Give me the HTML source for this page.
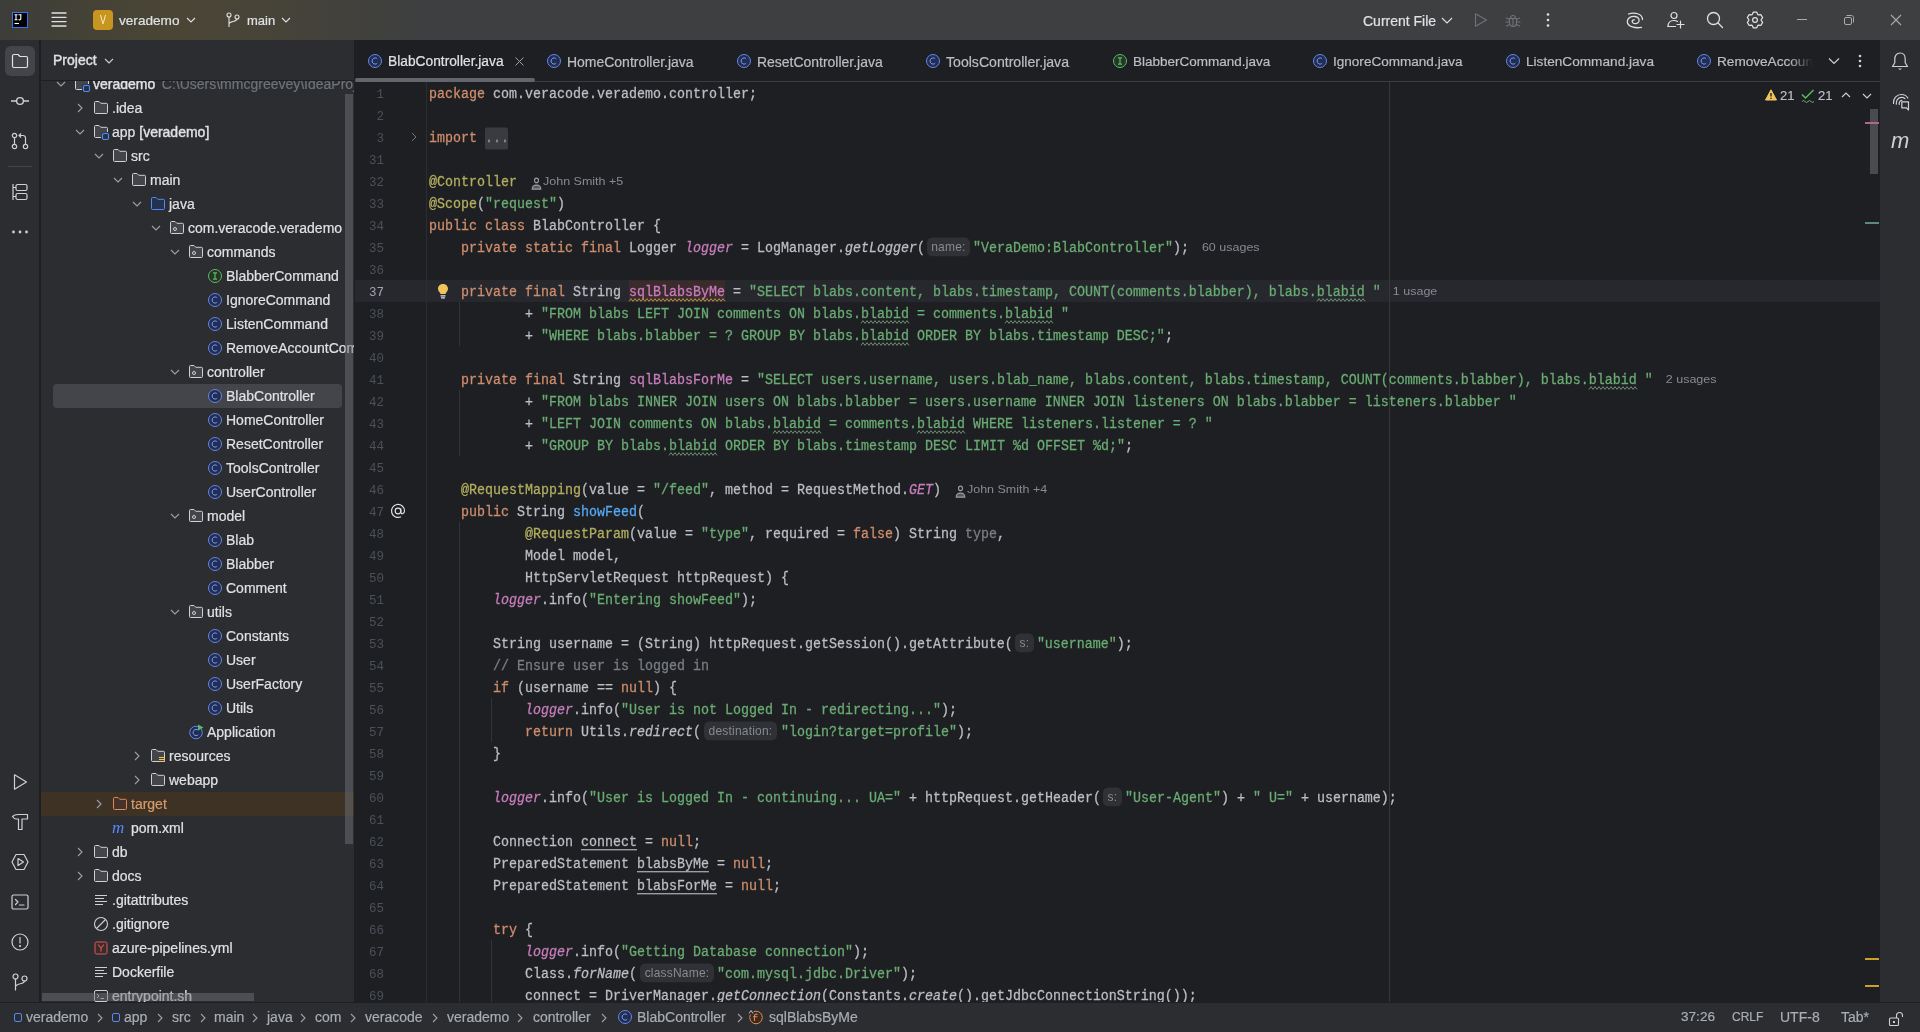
<!DOCTYPE html><html><head><meta charset="utf-8"><style>
*{margin:0;padding:0;box-sizing:border-box}
html,body{width:1920px;height:1032px;overflow:hidden;background:#1E1F22}
body{position:relative;font-family:"Liberation Sans",sans-serif;font-size:14px;color:#DFE1E5}
.a{position:absolute}
#title,#lstripe,#proj,#rstripe,#status,#editor{will-change:transform}
.ui{font-family:"Liberation Sans",sans-serif;white-space:pre;-webkit-text-stroke-width:0.2px}
svg{position:absolute;overflow:visible}
#title{left:0;top:0;width:1920px;height:40px;background:linear-gradient(90deg,#3C3C3A 0px,#444236 80px,#4A4535 170px,#484437 250px,#42413C 340px,#3E3F41 430px)}
#lstripe{left:0;top:40px;width:40px;height:962px;background:#2B2D30;border-right:1px solid #1E1F22}
#proj{left:41px;top:40px;width:313px;height:962px;background:#2B2D30;overflow:hidden}
#rstripe{left:1880px;top:40px;width:40px;height:962px;background:#2B2D30}
#status{left:0;top:1002px;width:1920px;height:30px;background:#2B2D30;border-top:1px solid #1E1F22}
#editor{left:355px;top:40px;width:1525px;height:962px;background:#1E1F22;overflow:hidden}
.row{position:absolute;left:0;height:24px;line-height:24px;white-space:pre;color:#DFE1E5;-webkit-text-stroke-width:0.2px}
.code{position:absolute;left:74px;height:22px;line-height:22px;transform:scaleY(1.1);transform-origin:0 15px;-webkit-text-stroke-width:0.25px;white-space:pre;font-family:"Liberation Mono",monospace;font-size:13.333px;color:#BCBEC4}
.ln{position:absolute;left:0;width:29px;text-align:right;height:22px;line-height:22px;font-family:"Liberation Mono",monospace;font-size:12.5px;color:#4B5059}
.kw{color:#CF8E6D}.s{color:#6AAB73}.an{color:#B3AE60}.f{color:#C77DBB}.fi{color:#C77DBB;font-style:italic}
.m{color:#56A8F5}.it{font-style:italic}.cm{color:#7A7E85}.gr{color:#7A7E85}
.ul{text-decoration:underline;text-underline-offset:3px;text-decoration-thickness:1px}
.wv{text-decoration:underline wavy #6A9955;text-underline-offset:2px;text-decoration-thickness:0.7px;text-decoration-skip-ink:none}
.hint{display:inline-block;height:16.4px;line-height:17.5px;vertical-align:top;margin-top:1.4px;border-radius:5px;background:#2F3135;color:#868A91;font-family:"Liberation Sans",sans-serif;font-size:12px;letter-spacing:0.2px;-webkit-text-stroke-width:0;text-align:center}
.usg{font-family:"Liberation Sans",sans-serif;font-size:12.5px;color:#868A91;display:inline-block;height:22px;line-height:22px;vertical-align:top;margin-top:-1.6px;transform:scaleY(0.86);transform-origin:0 15px;-webkit-text-stroke-width:0}
.tab{position:absolute;top:1px;height:41px;line-height:42px;white-space:pre;color:#BCBEC4;-webkit-text-stroke-width:0.2px}
</style></head><body><div id="title" class="a">
<div class="a" style="left:12px;top:12px;width:16px;height:16px;background:#000;border:1px solid #3574F0"></div>
<svg style="left:12px;top:12px" width="16" height="16" viewBox="0 0 16 16"><g fill="none" stroke="#fff" stroke-width="1.1"><path d="M2.5 2.8 H5.5 M4 2.8 V7.8 M2.5 7.8 H5.5 M6.5 2.8 H9.5 M8.8 2.8 V6.8 C8.8 7.8 7.5 8.2 6.6 7.4"/><path d="M2.5 11.5 H7"/></g></svg>
<svg style="left:51px;top:12px" width="16" height="16" viewBox="0 0 16 16"><g stroke="#DFE1E5" stroke-width="1.3" stroke-linecap="round"><line x1="1" y1="1" x2="15" y2="1"/><line x1="1" y1="5.3" x2="15" y2="5.3"/><line x1="1" y1="9.6" x2="15" y2="9.6"/><line x1="1" y1="14" x2="15" y2="14"/></g></svg>
<div class="a" style="left:93px;top:10px;width:20px;height:20px;border-radius:4px;background:#C8951F;color:#F6F0DC;font-size:12px;line-height:21px;text-align:center"><span style="display:inline-block;transform:scaleX(0.75)">V</span></div>
<div class="a ui" style="left:119px;top:1px;line-height:40px;font-size:13.6px;color:#DFE1E5">verademo</div>
<svg style="left:186px;top:16px" width="10" height="8" viewBox="0 0 10 8"><path d="M1 2 L5 6 L9 2" fill="none" stroke="#DFE1E5" stroke-width="1.1"/></svg>
<svg style="left:226px;top:12px" width="14" height="16" viewBox="0 0 14 16"><g fill="none" stroke="#DFE1E5" stroke-width="1.1"><circle cx="3" cy="3" r="2"/><circle cx="11" cy="5" r="2"/><path d="M3 5 V15 M11 7 C11 10 3 9 3 12"/></g></svg>
<div class="a ui" style="left:247px;top:1px;line-height:40px;font-size:13px;color:#DFE1E5">main</div>
<svg style="left:281px;top:16px" width="10" height="8" viewBox="0 0 10 8"><path d="M1 2 L5 6 L9 2" fill="none" stroke="#DFE1E5" stroke-width="1.1"/></svg>
<div class="a ui" style="left:1363px;top:1px;line-height:40px;font-size:14px;color:#DFE1E5">Current File</div>
<svg style="left:1441px;top:16px" width="12" height="8" viewBox="0 0 12 8"><path d="M1 2 L6 7 L11 2" fill="none" stroke="#DFE1E5" stroke-width="1.1"/></svg>
<svg style="left:1473px;top:12px" width="16" height="16" viewBox="0 0 16 16"><path d="M2.5 1.8 L13.5 8 L2.5 14.2 Z" fill="none" stroke="#6F737A" stroke-width="1.1" stroke-linejoin="round"/></svg>
<svg style="left:1505px;top:12px" width="16" height="16" viewBox="0 0 16 16"><g fill="none" stroke="#6F737A" stroke-width="1.1" stroke-linecap="round" stroke-linejoin="round"><path d="M4.5 6.5 H11.5 V10.5 C11.5 12.7 10 14.5 8 14.5 C6 14.5 4.5 12.7 4.5 10.5 Z"/><path d="M5.5 6.5 C5.5 4.8 6.5 3.5 8 3.5 C9.5 3.5 10.5 4.8 10.5 6.5"/><path d="M8 6.5 V14.5 M1.5 6 L4.5 7.5 M14.5 6 L11.5 7.5 M1 10 H4.5 M15 10 H11.5 M1.5 14 L4.8 12.5 M14.5 14 L11.2 12.5"/></g></svg>
<svg style="left:1545px;top:12px" width="6" height="16" viewBox="0 0 6 16"><g fill="#DFE1E5"><circle cx="3" cy="2.5" r="1.3"/><circle cx="3" cy="8" r="1.3"/><circle cx="3" cy="13.5" r="1.3"/></g></svg>
<svg style="left:1626px;top:12px" width="18" height="17" viewBox="0 0 18 17"><g fill="none" stroke="#DFE1E5" stroke-width="1.3" stroke-linecap="round"><path d="M2.5 2 C8 0 16.5 1.5 16.5 7.5"/><path d="M15.5 15.3 C10 16.5 1.3 15 1.3 9.5 C1.3 5.5 5.5 4 9 4.5 C12.5 5 13.7 7.5 12.8 9.8 C11.8 12 8.3 12.2 6.7 10.6 C5.5 9.3 6.5 7.6 8.3 7.8"/></g></svg>
<svg style="left:1667px;top:11px" width="18" height="18" viewBox="0 0 18 18"><g fill="none" stroke="#DFE1E5" stroke-width="1.2" stroke-linecap="round"><circle cx="7" cy="4.5" r="3"/><path d="M1 15.5 C1 11 4 9.5 7 9.5 C8.5 9.5 9.5 9.8 10.5 10.4"/><path d="M1 15.5 H8.5 M13.5 10 V17 M10 13.5 H17"/></g></svg>
<svg style="left:1706px;top:11px" width="18" height="18" viewBox="0 0 18 18"><g fill="none" stroke="#DFE1E5" stroke-width="1.3" stroke-linecap="round"><circle cx="7.5" cy="7.5" r="6"/><path d="M12 12 L16.5 16.5"/></g></svg>
<svg style="left:1746px;top:11px" width="18" height="18" viewBox="0 0 18 18"><g fill="none" stroke="#DFE1E5" stroke-width="1.2" stroke-linejoin="round"><path d="M6.28 3.43 L7.20 1.21 L10.80 1.21 L11.72 3.43 L12.47 3.86 L14.85 3.54 L16.65 6.66 L15.18 8.57 L15.18 9.43 L16.65 11.34 L14.85 14.46 L12.47 14.14 L11.72 14.57 L10.80 16.79 L7.20 16.79 L6.28 14.57 L5.53 14.14 L3.15 14.46 L1.35 11.34 L2.82 9.43 L2.82 8.57 L1.35 6.66 L3.15 3.54 L5.53 3.86 Z"/><circle cx="9" cy="9" r="2.4"/></g></svg>
<div class="a" style="left:1797px;top:19px;width:10px;height:1px;background:#A9ABB0"></div>
<svg style="left:1843px;top:14px" width="12" height="12" viewBox="0 0 12 12"><g fill="none" stroke="#A9ABB0" stroke-width="1"><rect x="1.5" y="3.5" width="7" height="7" rx="1.5"/><path d="M3.5 1.5 H8.5 C9.6 1.5 10.5 2.4 10.5 3.5 V8.5"/></g></svg>
<svg style="left:1890px;top:14px" width="12" height="12" viewBox="0 0 12 12"><g stroke="#A9ABB0" stroke-width="1.1"><path d="M1 1 L11 11 M11 1 L1 11"/></g></svg>
</div>
<div id="lstripe" class="a">
<div class="a" style="left:5px;top:6px;width:30px;height:30px;border-radius:6px;background:#43454A"></div>
<svg style="left:11px;top:13px" width="18" height="16" viewBox="0 0 18 16"><path d="M1.5 3 C1.5 2 2.2 1.5 3 1.5 H7 L9 3.5 H15 C15.8 3.5 16.5 4.2 16.5 5 V13 C16.5 13.8 15.8 14.5 15 14.5 H3 C2.2 14.5 1.5 13.8 1.5 13 Z" fill="none" stroke="#DFE1E5" stroke-width="1.2" stroke-linejoin="round"/></svg>
<svg style="left:10px;top:53px" width="20" height="16" viewBox="0 0 20 16"><g fill="none" stroke="#CED0D6" stroke-width="1.4"><circle cx="10" cy="8" r="3.4"/><path d="M1 8 H6.8 M13.2 8 H19"/></g></svg>
<svg style="left:11px;top:92px" width="18" height="18" viewBox="0 0 18 18"><g fill="none" stroke="#CED0D6" stroke-width="1.2"><circle cx="3.5" cy="3.5" r="2.2"/><circle cx="3.5" cy="14.5" r="2.2"/><circle cx="14.5" cy="14.5" r="2.2"/><path d="M3.5 5.7 V12.3 M14.5 12.3 V6 C14.5 4.5 13.5 3.5 12 3.5 H8 M10 1.5 L8 3.5 L10 5.5"/></g></svg>
<div class="a" style="left:8px;top:126px;width:24px;height:1px;background:#43454A"></div>
<svg style="left:11px;top:143px" width="18" height="18" viewBox="0 0 18 18"><g fill="none" stroke="#CED0D6" stroke-width="1.2"><path d="M2 1 V17 M2 4.5 H5 M2 13.5 H5"/><rect x="5" y="1.5" width="11" height="6" rx="1.5"/><rect x="5" y="10.5" width="11" height="6" rx="1.5"/></g></svg>
<svg style="left:11px;top:189px" width="18" height="6" viewBox="0 0 18 6"><g fill="#CED0D6"><circle cx="2.5" cy="3" r="1.4"/><circle cx="9" cy="3" r="1.4"/><circle cx="15.5" cy="3" r="1.4"/></g></svg>
<svg style="left:10px;top:732px" width="20" height="20" viewBox="0 0 20 20"><g fill="none" stroke="#CED0D6" stroke-width="1.2" stroke-linejoin="round" stroke-linecap="round"><path d="M4.5 2.8 L16.5 10 L4.5 17.2 Z"/></g></svg>
<svg style="left:10px;top:772px" width="20" height="20" viewBox="0 0 20 20"><g fill="none" stroke="#CED0D6" stroke-width="1.2" stroke-linejoin="round" stroke-linecap="round"><path d="M2.5 4.5 C4 3 6 2.5 8 2.5 H17.5 V7 H12 V17.5 H8.5 V7 H6 C4.5 7 3.5 6 2.5 4.5 Z"/></g></svg>
<svg style="left:10px;top:812px" width="20" height="20" viewBox="0 0 20 20"><g fill="none" stroke="#CED0D6" stroke-width="1.2" stroke-linejoin="round" stroke-linecap="round"><path d="M6 2.5 H14 L18 10 L14 17.5 H6 L2 10 Z"/><path d="M8 6.5 L13.5 10 L8 13.5 Z"/></g></svg>
<svg style="left:10px;top:852px" width="20" height="20" viewBox="0 0 20 20"><g fill="none" stroke="#CED0D6" stroke-width="1.2" stroke-linejoin="round" stroke-linecap="round"><rect x="2" y="3" width="16" height="14" rx="1.5"/><path d="M5.5 7.5 L8 10 L5.5 12.5 M9.5 13 H14"/></g></svg>
<svg style="left:10px;top:892px" width="20" height="20" viewBox="0 0 20 20"><g fill="none" stroke="#CED0D6" stroke-width="1.2" stroke-linejoin="round" stroke-linecap="round"><circle cx="10" cy="10" r="8"/><path d="M10 5.5 V11"/><circle cx="10" cy="14" r="0.5" fill="#CED0D6"/></g></svg>
<svg style="left:10px;top:932px" width="20" height="20" viewBox="0 0 20 20"><g fill="none" stroke="#CED0D6" stroke-width="1.2" stroke-linejoin="round" stroke-linecap="round"><circle cx="5.5" cy="4.5" r="2.5"/><circle cx="14.5" cy="6.5" r="2.5"/><path d="M5.5 7 V18 M14.5 9 C14.5 12.5 5.5 11 5.5 15"/></g></svg>
</div>
<div id="proj" class="a">
<div class="a ui" style="left:12px;top:0;line-height:41px;font-size:14px;-webkit-text-stroke:0.4px #DFE1E5;color:#DFE1E5">Project</div>
<svg style="left:63px;top:17px" width="10" height="8" viewBox="0 0 10 8"><path d="M1 2 L5 6 L9 2" fill="none" stroke="#CED0D6" stroke-width="1.1"/></svg>
<div class="a" style="left:0;top:41px;width:313px;height:921px;overflow:hidden">
<svg style="left:15px;top:-2px" width="10" height="10" viewBox="0 0 10 10"><path d="M1 3 L5 7 L9 3" fill="none" stroke="#9DA0A8" stroke-width="1.1"/></svg>
<svg style="left:33px;top:-5px" width="16" height="16" viewBox="0 0 16 16"><path d="M1.5 2.5 C1.5 1.9 1.9 1.5 2.5 1.5 H6 L7.8 3.3 H13.5 C14.1 3.3 14.5 3.7 14.5 4.3 V8.5 H8.5 V13.5 H2.5 C1.9 13.5 1.5 13.1 1.5 12.5 Z" fill="#43454A" stroke="none"/><path d="M14.5 8 V4.3 C14.5 3.7 14.1 3.3 13.5 3.3 H7.8 L6 1.5 H2.5 C1.9 1.5 1.5 1.9 1.5 2.5 V12.5 C1.5 13.1 1.9 13.5 2.5 13.5 H8" fill="none" stroke="#CED0D6" stroke-width="1"/><rect x="9.5" y="9.5" width="6" height="6" rx="1.2" fill="#25324D" stroke="#548AF7" stroke-width="1.1"/></svg>
<div class="row" style="left:52px;top:-9px"><span style="-webkit-text-stroke:0.4px #DFE1E5">verademo</span><span style="color:#6F737A;margin-left:6.5px">C:\Users\mmcgreevey\IdeaProjects\verademo</span></div>
<svg style="left:34px;top:22px" width="10" height="10" viewBox="0 0 10 10"><path d="M3 1 L7 5 L3 9" fill="none" stroke="#9DA0A8" stroke-width="1.1"/></svg>
<svg style="left:52px;top:19px" width="16" height="16" viewBox="0 0 16 16"><path d="M1.5 2.5 C1.5 1.9 1.9 1.5 2.5 1.5 H6 L7.8 3.3 H13.5 C14.1 3.3 14.5 3.7 14.5 4.3 V12.5 C14.5 13.1 14.1 13.5 13.5 13.5 H2.5 C1.9 13.5 1.5 13.1 1.5 12.5 Z" fill="#43454A" stroke="#CED0D6" stroke-width="1"/></svg>
<div class="row" style="left:71px;top:15px">.idea</div>
<svg style="left:34px;top:46px" width="10" height="10" viewBox="0 0 10 10"><path d="M1 3 L5 7 L9 3" fill="none" stroke="#9DA0A8" stroke-width="1.1"/></svg>
<svg style="left:52px;top:43px" width="16" height="16" viewBox="0 0 16 16"><path d="M1.5 2.5 C1.5 1.9 1.9 1.5 2.5 1.5 H6 L7.8 3.3 H13.5 C14.1 3.3 14.5 3.7 14.5 4.3 V8.5 H8.5 V13.5 H2.5 C1.9 13.5 1.5 13.1 1.5 12.5 Z" fill="#43454A" stroke="none"/><path d="M14.5 8 V4.3 C14.5 3.7 14.1 3.3 13.5 3.3 H7.8 L6 1.5 H2.5 C1.9 1.5 1.5 1.9 1.5 2.5 V12.5 C1.5 13.1 1.9 13.5 2.5 13.5 H8" fill="none" stroke="#CED0D6" stroke-width="1"/><rect x="9.5" y="9.5" width="6" height="6" rx="1.2" fill="#25324D" stroke="#548AF7" stroke-width="1.1"/></svg>
<div class="row" style="left:71px;top:39px">app <span style="-webkit-text-stroke:0.4px #DFE1E5">[verademo]</span></div>
<svg style="left:53px;top:70px" width="10" height="10" viewBox="0 0 10 10"><path d="M1 3 L5 7 L9 3" fill="none" stroke="#9DA0A8" stroke-width="1.1"/></svg>
<svg style="left:71px;top:67px" width="16" height="16" viewBox="0 0 16 16"><path d="M1.5 2.5 C1.5 1.9 1.9 1.5 2.5 1.5 H6 L7.8 3.3 H13.5 C14.1 3.3 14.5 3.7 14.5 4.3 V12.5 C14.5 13.1 14.1 13.5 13.5 13.5 H2.5 C1.9 13.5 1.5 13.1 1.5 12.5 Z" fill="#43454A" stroke="#CED0D6" stroke-width="1"/></svg>
<div class="row" style="left:90px;top:63px">src</div>
<svg style="left:72px;top:94px" width="10" height="10" viewBox="0 0 10 10"><path d="M1 3 L5 7 L9 3" fill="none" stroke="#9DA0A8" stroke-width="1.1"/></svg>
<svg style="left:90px;top:91px" width="16" height="16" viewBox="0 0 16 16"><path d="M1.5 2.5 C1.5 1.9 1.9 1.5 2.5 1.5 H6 L7.8 3.3 H13.5 C14.1 3.3 14.5 3.7 14.5 4.3 V12.5 C14.5 13.1 14.1 13.5 13.5 13.5 H2.5 C1.9 13.5 1.5 13.1 1.5 12.5 Z" fill="#43454A" stroke="#CED0D6" stroke-width="1"/></svg>
<div class="row" style="left:109px;top:87px">main</div>
<svg style="left:91px;top:118px" width="10" height="10" viewBox="0 0 10 10"><path d="M1 3 L5 7 L9 3" fill="none" stroke="#9DA0A8" stroke-width="1.1"/></svg>
<svg style="left:109px;top:115px" width="16" height="16" viewBox="0 0 16 16"><path d="M1.5 2.5 C1.5 1.9 1.9 1.5 2.5 1.5 H6 L7.8 3.3 H13.5 C14.1 3.3 14.5 3.7 14.5 4.3 V12.5 C14.5 13.1 14.1 13.5 13.5 13.5 H2.5 C1.9 13.5 1.5 13.1 1.5 12.5 Z" fill="#25324D" stroke="#548AF7" stroke-width="1"/></svg>
<div class="row" style="left:128px;top:111px">java</div>
<svg style="left:110px;top:142px" width="10" height="10" viewBox="0 0 10 10"><path d="M1 3 L5 7 L9 3" fill="none" stroke="#9DA0A8" stroke-width="1.1"/></svg>
<svg style="left:128px;top:139px" width="16" height="16" viewBox="0 0 16 16"><path d="M1.5 2.5 C1.5 1.9 1.9 1.5 2.5 1.5 H6 L7.8 3.3 H13.5 C14.1 3.3 14.5 3.7 14.5 4.3 V12.5 C14.5 13.1 14.1 13.5 13.5 13.5 H2.5 C1.9 13.5 1.5 13.1 1.5 12.5 Z" fill="#43454A" stroke="#CED0D6" stroke-width="1"/><circle cx="6" cy="9" r="1.5" fill="none" stroke="#CED0D6" stroke-width="1"/></svg>
<div class="row" style="left:147px;top:135px">com.veracode.verademo</div>
<svg style="left:129px;top:166px" width="10" height="10" viewBox="0 0 10 10"><path d="M1 3 L5 7 L9 3" fill="none" stroke="#9DA0A8" stroke-width="1.1"/></svg>
<svg style="left:147px;top:163px" width="16" height="16" viewBox="0 0 16 16"><path d="M1.5 2.5 C1.5 1.9 1.9 1.5 2.5 1.5 H6 L7.8 3.3 H13.5 C14.1 3.3 14.5 3.7 14.5 4.3 V12.5 C14.5 13.1 14.1 13.5 13.5 13.5 H2.5 C1.9 13.5 1.5 13.1 1.5 12.5 Z" fill="#43454A" stroke="#CED0D6" stroke-width="1"/><circle cx="6" cy="9" r="1.5" fill="none" stroke="#CED0D6" stroke-width="1"/></svg>
<div class="row" style="left:166px;top:159px">commands</div>
<svg style="left:166px;top:187px" width="16" height="16" viewBox="0 0 16 16"><circle cx="8" cy="8" r="6.5" fill="#253627" stroke="#5FB865" stroke-width="1"/><path d="M6 4.8 H10 M6 11.2 H10 M8 4.8 V11.2" fill="none" stroke="#5FB865" stroke-width="1.2"/></svg>
<div class="row" style="left:185px;top:183px">BlabberCommand</div>
<svg style="left:166px;top:211px" width="16" height="16" viewBox="0 0 16 16"><circle cx="8" cy="8" r="6.5" fill="#222D52" stroke="#6387EB" stroke-width="1"/><path d="M10.2 5.8 C9.7 5.2 9 4.9 8.1 4.9 C6.4 4.9 5.1 6.3 5.1 8 C5.1 9.7 6.4 11.1 8.1 11.1 C9 11.1 9.7 10.8 10.2 10.2" fill="none" stroke="#7D9CF0" stroke-width="1"/></svg>
<div class="row" style="left:185px;top:207px">IgnoreCommand</div>
<svg style="left:166px;top:235px" width="16" height="16" viewBox="0 0 16 16"><circle cx="8" cy="8" r="6.5" fill="#222D52" stroke="#6387EB" stroke-width="1"/><path d="M10.2 5.8 C9.7 5.2 9 4.9 8.1 4.9 C6.4 4.9 5.1 6.3 5.1 8 C5.1 9.7 6.4 11.1 8.1 11.1 C9 11.1 9.7 10.8 10.2 10.2" fill="none" stroke="#7D9CF0" stroke-width="1"/></svg>
<div class="row" style="left:185px;top:231px">ListenCommand</div>
<svg style="left:166px;top:259px" width="16" height="16" viewBox="0 0 16 16"><circle cx="8" cy="8" r="6.5" fill="#222D52" stroke="#6387EB" stroke-width="1"/><path d="M10.2 5.8 C9.7 5.2 9 4.9 8.1 4.9 C6.4 4.9 5.1 6.3 5.1 8 C5.1 9.7 6.4 11.1 8.1 11.1 C9 11.1 9.7 10.8 10.2 10.2" fill="none" stroke="#7D9CF0" stroke-width="1"/></svg>
<div class="row" style="left:185px;top:255px">RemoveAccountCommand</div>
<svg style="left:129px;top:286px" width="10" height="10" viewBox="0 0 10 10"><path d="M1 3 L5 7 L9 3" fill="none" stroke="#9DA0A8" stroke-width="1.1"/></svg>
<svg style="left:147px;top:283px" width="16" height="16" viewBox="0 0 16 16"><path d="M1.5 2.5 C1.5 1.9 1.9 1.5 2.5 1.5 H6 L7.8 3.3 H13.5 C14.1 3.3 14.5 3.7 14.5 4.3 V12.5 C14.5 13.1 14.1 13.5 13.5 13.5 H2.5 C1.9 13.5 1.5 13.1 1.5 12.5 Z" fill="#43454A" stroke="#CED0D6" stroke-width="1"/><circle cx="6" cy="9" r="1.5" fill="none" stroke="#CED0D6" stroke-width="1"/></svg>
<div class="row" style="left:166px;top:279px">controller</div>
<div class="a" style="left:12px;top:303px;width:289px;height:24px;border-radius:4px;background:#43454A"></div>
<svg style="left:166px;top:307px" width="16" height="16" viewBox="0 0 16 16"><circle cx="8" cy="8" r="6.5" fill="#222D52" stroke="#6387EB" stroke-width="1"/><path d="M10.2 5.8 C9.7 5.2 9 4.9 8.1 4.9 C6.4 4.9 5.1 6.3 5.1 8 C5.1 9.7 6.4 11.1 8.1 11.1 C9 11.1 9.7 10.8 10.2 10.2" fill="none" stroke="#7D9CF0" stroke-width="1"/></svg>
<div class="row" style="left:185px;top:303px">BlabController</div>
<svg style="left:166px;top:331px" width="16" height="16" viewBox="0 0 16 16"><circle cx="8" cy="8" r="6.5" fill="#222D52" stroke="#6387EB" stroke-width="1"/><path d="M10.2 5.8 C9.7 5.2 9 4.9 8.1 4.9 C6.4 4.9 5.1 6.3 5.1 8 C5.1 9.7 6.4 11.1 8.1 11.1 C9 11.1 9.7 10.8 10.2 10.2" fill="none" stroke="#7D9CF0" stroke-width="1"/></svg>
<div class="row" style="left:185px;top:327px">HomeController</div>
<svg style="left:166px;top:355px" width="16" height="16" viewBox="0 0 16 16"><circle cx="8" cy="8" r="6.5" fill="#222D52" stroke="#6387EB" stroke-width="1"/><path d="M10.2 5.8 C9.7 5.2 9 4.9 8.1 4.9 C6.4 4.9 5.1 6.3 5.1 8 C5.1 9.7 6.4 11.1 8.1 11.1 C9 11.1 9.7 10.8 10.2 10.2" fill="none" stroke="#7D9CF0" stroke-width="1"/></svg>
<div class="row" style="left:185px;top:351px">ResetController</div>
<svg style="left:166px;top:379px" width="16" height="16" viewBox="0 0 16 16"><circle cx="8" cy="8" r="6.5" fill="#222D52" stroke="#6387EB" stroke-width="1"/><path d="M10.2 5.8 C9.7 5.2 9 4.9 8.1 4.9 C6.4 4.9 5.1 6.3 5.1 8 C5.1 9.7 6.4 11.1 8.1 11.1 C9 11.1 9.7 10.8 10.2 10.2" fill="none" stroke="#7D9CF0" stroke-width="1"/></svg>
<div class="row" style="left:185px;top:375px">ToolsController</div>
<svg style="left:166px;top:403px" width="16" height="16" viewBox="0 0 16 16"><circle cx="8" cy="8" r="6.5" fill="#222D52" stroke="#6387EB" stroke-width="1"/><path d="M10.2 5.8 C9.7 5.2 9 4.9 8.1 4.9 C6.4 4.9 5.1 6.3 5.1 8 C5.1 9.7 6.4 11.1 8.1 11.1 C9 11.1 9.7 10.8 10.2 10.2" fill="none" stroke="#7D9CF0" stroke-width="1"/></svg>
<div class="row" style="left:185px;top:399px">UserController</div>
<svg style="left:129px;top:430px" width="10" height="10" viewBox="0 0 10 10"><path d="M1 3 L5 7 L9 3" fill="none" stroke="#9DA0A8" stroke-width="1.1"/></svg>
<svg style="left:147px;top:427px" width="16" height="16" viewBox="0 0 16 16"><path d="M1.5 2.5 C1.5 1.9 1.9 1.5 2.5 1.5 H6 L7.8 3.3 H13.5 C14.1 3.3 14.5 3.7 14.5 4.3 V12.5 C14.5 13.1 14.1 13.5 13.5 13.5 H2.5 C1.9 13.5 1.5 13.1 1.5 12.5 Z" fill="#43454A" stroke="#CED0D6" stroke-width="1"/><circle cx="6" cy="9" r="1.5" fill="none" stroke="#CED0D6" stroke-width="1"/></svg>
<div class="row" style="left:166px;top:423px">model</div>
<svg style="left:166px;top:451px" width="16" height="16" viewBox="0 0 16 16"><circle cx="8" cy="8" r="6.5" fill="#222D52" stroke="#6387EB" stroke-width="1"/><path d="M10.2 5.8 C9.7 5.2 9 4.9 8.1 4.9 C6.4 4.9 5.1 6.3 5.1 8 C5.1 9.7 6.4 11.1 8.1 11.1 C9 11.1 9.7 10.8 10.2 10.2" fill="none" stroke="#7D9CF0" stroke-width="1"/></svg>
<div class="row" style="left:185px;top:447px">Blab</div>
<svg style="left:166px;top:475px" width="16" height="16" viewBox="0 0 16 16"><circle cx="8" cy="8" r="6.5" fill="#222D52" stroke="#6387EB" stroke-width="1"/><path d="M10.2 5.8 C9.7 5.2 9 4.9 8.1 4.9 C6.4 4.9 5.1 6.3 5.1 8 C5.1 9.7 6.4 11.1 8.1 11.1 C9 11.1 9.7 10.8 10.2 10.2" fill="none" stroke="#7D9CF0" stroke-width="1"/></svg>
<div class="row" style="left:185px;top:471px">Blabber</div>
<svg style="left:166px;top:499px" width="16" height="16" viewBox="0 0 16 16"><circle cx="8" cy="8" r="6.5" fill="#222D52" stroke="#6387EB" stroke-width="1"/><path d="M10.2 5.8 C9.7 5.2 9 4.9 8.1 4.9 C6.4 4.9 5.1 6.3 5.1 8 C5.1 9.7 6.4 11.1 8.1 11.1 C9 11.1 9.7 10.8 10.2 10.2" fill="none" stroke="#7D9CF0" stroke-width="1"/></svg>
<div class="row" style="left:185px;top:495px">Comment</div>
<svg style="left:129px;top:526px" width="10" height="10" viewBox="0 0 10 10"><path d="M1 3 L5 7 L9 3" fill="none" stroke="#9DA0A8" stroke-width="1.1"/></svg>
<svg style="left:147px;top:523px" width="16" height="16" viewBox="0 0 16 16"><path d="M1.5 2.5 C1.5 1.9 1.9 1.5 2.5 1.5 H6 L7.8 3.3 H13.5 C14.1 3.3 14.5 3.7 14.5 4.3 V12.5 C14.5 13.1 14.1 13.5 13.5 13.5 H2.5 C1.9 13.5 1.5 13.1 1.5 12.5 Z" fill="#43454A" stroke="#CED0D6" stroke-width="1"/><circle cx="6" cy="9" r="1.5" fill="none" stroke="#CED0D6" stroke-width="1"/></svg>
<div class="row" style="left:166px;top:519px">utils</div>
<svg style="left:166px;top:547px" width="16" height="16" viewBox="0 0 16 16"><circle cx="8" cy="8" r="6.5" fill="#222D52" stroke="#6387EB" stroke-width="1"/><path d="M10.2 5.8 C9.7 5.2 9 4.9 8.1 4.9 C6.4 4.9 5.1 6.3 5.1 8 C5.1 9.7 6.4 11.1 8.1 11.1 C9 11.1 9.7 10.8 10.2 10.2" fill="none" stroke="#7D9CF0" stroke-width="1"/></svg>
<div class="row" style="left:185px;top:543px">Constants</div>
<svg style="left:166px;top:571px" width="16" height="16" viewBox="0 0 16 16"><circle cx="8" cy="8" r="6.5" fill="#222D52" stroke="#6387EB" stroke-width="1"/><path d="M10.2 5.8 C9.7 5.2 9 4.9 8.1 4.9 C6.4 4.9 5.1 6.3 5.1 8 C5.1 9.7 6.4 11.1 8.1 11.1 C9 11.1 9.7 10.8 10.2 10.2" fill="none" stroke="#7D9CF0" stroke-width="1"/></svg>
<div class="row" style="left:185px;top:567px">User</div>
<svg style="left:166px;top:595px" width="16" height="16" viewBox="0 0 16 16"><circle cx="8" cy="8" r="6.5" fill="#222D52" stroke="#6387EB" stroke-width="1"/><path d="M10.2 5.8 C9.7 5.2 9 4.9 8.1 4.9 C6.4 4.9 5.1 6.3 5.1 8 C5.1 9.7 6.4 11.1 8.1 11.1 C9 11.1 9.7 10.8 10.2 10.2" fill="none" stroke="#7D9CF0" stroke-width="1"/></svg>
<div class="row" style="left:185px;top:591px">UserFactory</div>
<svg style="left:166px;top:619px" width="16" height="16" viewBox="0 0 16 16"><circle cx="8" cy="8" r="6.5" fill="#222D52" stroke="#6387EB" stroke-width="1"/><path d="M10.2 5.8 C9.7 5.2 9 4.9 8.1 4.9 C6.4 4.9 5.1 6.3 5.1 8 C5.1 9.7 6.4 11.1 8.1 11.1 C9 11.1 9.7 10.8 10.2 10.2" fill="none" stroke="#7D9CF0" stroke-width="1"/></svg>
<div class="row" style="left:185px;top:615px">Utils</div>
<svg style="left:147px;top:643px" width="16" height="16" viewBox="0 0 16 16"><circle cx="8" cy="8.5" r="6.3" fill="#222D52" stroke="#6387EB" stroke-width="1"/><path d="M10.2 6.3 C9.7 5.7 9 5.4 8.1 5.4 C6.4 5.4 5.1 6.8 5.1 8.5 C5.1 10.2 6.4 11.6 8.1 11.6 C9 11.6 9.7 11.3 10.2 10.7" fill="none" stroke="#7D9CF0" stroke-width="1"/><path d="M10 0.5 L15.5 3.5 L10 6.5 Z" fill="#5FB865"/></svg>
<div class="row" style="left:166px;top:639px">Application</div>
<svg style="left:91px;top:670px" width="10" height="10" viewBox="0 0 10 10"><path d="M3 1 L7 5 L3 9" fill="none" stroke="#9DA0A8" stroke-width="1.1"/></svg>
<svg style="left:109px;top:667px" width="16" height="16" viewBox="0 0 16 16"><path d="M1.5 2.5 C1.5 1.9 1.9 1.5 2.5 1.5 H6 L7.8 3.3 H13.5 C14.1 3.3 14.5 3.7 14.5 4.3 V12.5 C14.5 13.1 14.1 13.5 13.5 13.5 H2.5 C1.9 13.5 1.5 13.1 1.5 12.5 Z" fill="#43454A" stroke="#CED0D6" stroke-width="1"/><path d="M9 9.5 H15 M9 11.5 H15 M9 13.5 H15" stroke="#F2C55C" stroke-width="1"/></svg>
<div class="row" style="left:128px;top:663px">resources</div>
<svg style="left:91px;top:694px" width="10" height="10" viewBox="0 0 10 10"><path d="M3 1 L7 5 L3 9" fill="none" stroke="#9DA0A8" stroke-width="1.1"/></svg>
<svg style="left:109px;top:691px" width="16" height="16" viewBox="0 0 16 16"><path d="M1.5 2.5 C1.5 1.9 1.9 1.5 2.5 1.5 H6 L7.8 3.3 H13.5 C14.1 3.3 14.5 3.7 14.5 4.3 V12.5 C14.5 13.1 14.1 13.5 13.5 13.5 H2.5 C1.9 13.5 1.5 13.1 1.5 12.5 Z" fill="#43454A" stroke="#CED0D6" stroke-width="1"/></svg>
<div class="row" style="left:128px;top:687px">webapp</div>
<div class="a" style="left:0;top:711px;width:313px;height:24px;background:#3D3224"></div>
<svg style="left:53px;top:718px" width="10" height="10" viewBox="0 0 10 10"><path d="M3 1 L7 5 L3 9" fill="none" stroke="#9DA0A8" stroke-width="1.1"/></svg>
<svg style="left:71px;top:715px" width="16" height="16" viewBox="0 0 16 16"><path d="M1.5 2.5 C1.5 1.9 1.9 1.5 2.5 1.5 H6 L7.8 3.3 H13.5 C14.1 3.3 14.5 3.7 14.5 4.3 V12.5 C14.5 13.1 14.1 13.5 13.5 13.5 H2.5 C1.9 13.5 1.5 13.1 1.5 12.5 Z" fill="#45322B" stroke="#E08855" stroke-width="1"/></svg>
<div class="row" style="left:90px;top:711px"><span style="color:#D79B6B">target</span></div>
<svg style="left:71px;top:739px" width="16" height="16" viewBox="0 0 16 16"><text x="0" y="13" font-family="Liberation Serif" font-style="italic" font-size="17" fill="#548AF7">m</text></svg>
<div class="row" style="left:90px;top:735px">pom.xml</div>
<svg style="left:34px;top:766px" width="10" height="10" viewBox="0 0 10 10"><path d="M3 1 L7 5 L3 9" fill="none" stroke="#9DA0A8" stroke-width="1.1"/></svg>
<svg style="left:52px;top:763px" width="16" height="16" viewBox="0 0 16 16"><path d="M1.5 2.5 C1.5 1.9 1.9 1.5 2.5 1.5 H6 L7.8 3.3 H13.5 C14.1 3.3 14.5 3.7 14.5 4.3 V12.5 C14.5 13.1 14.1 13.5 13.5 13.5 H2.5 C1.9 13.5 1.5 13.1 1.5 12.5 Z" fill="#43454A" stroke="#CED0D6" stroke-width="1"/></svg>
<div class="row" style="left:71px;top:759px">db</div>
<svg style="left:34px;top:790px" width="10" height="10" viewBox="0 0 10 10"><path d="M3 1 L7 5 L3 9" fill="none" stroke="#9DA0A8" stroke-width="1.1"/></svg>
<svg style="left:52px;top:787px" width="16" height="16" viewBox="0 0 16 16"><path d="M1.5 2.5 C1.5 1.9 1.9 1.5 2.5 1.5 H6 L7.8 3.3 H13.5 C14.1 3.3 14.5 3.7 14.5 4.3 V12.5 C14.5 13.1 14.1 13.5 13.5 13.5 H2.5 C1.9 13.5 1.5 13.1 1.5 12.5 Z" fill="#43454A" stroke="#CED0D6" stroke-width="1"/></svg>
<div class="row" style="left:71px;top:783px">docs</div>
<svg style="left:52px;top:811px" width="16" height="16" viewBox="0 0 16 16"><path d="M2 3.5 H14 M2 6.5 H11 M2 9.5 H14 M2 12.5 H10" stroke="#CED0D6" stroke-width="1.1"/></svg>
<div class="row" style="left:71px;top:807px">.gitattributes</div>
<svg style="left:52px;top:835px" width="16" height="16" viewBox="0 0 16 16"><circle cx="8" cy="8" r="6.5" fill="none" stroke="#CED0D6" stroke-width="1.1"/><path d="M3.5 12.5 L12.5 3.5" stroke="#CED0D6" stroke-width="1.1"/></svg>
<div class="row" style="left:71px;top:831px">.gitignore</div>
<svg style="left:52px;top:859px" width="16" height="16" viewBox="0 0 16 16"><rect x="2" y="2" width="12" height="12" rx="1.5" fill="#3F2A2A" stroke="#DB5C5C" stroke-width="1"/><path d="M5 4.5 L8 8 L11 4.5 M8 8 V11.5" fill="none" stroke="#DB5C5C" stroke-width="1.1"/></svg>
<div class="row" style="left:71px;top:855px">azure-pipelines.yml</div>
<svg style="left:52px;top:883px" width="16" height="16" viewBox="0 0 16 16"><path d="M2 3.5 H14 M2 6.5 H11 M2 9.5 H14 M2 12.5 H10" stroke="#CED0D6" stroke-width="1.1"/></svg>
<div class="row" style="left:71px;top:879px">Dockerfile</div>
<svg style="left:52px;top:907px" width="16" height="16" viewBox="0 0 16 16"><rect x="1.5" y="2.5" width="13" height="11" rx="1.5" fill="none" stroke="#CED0D6" stroke-width="1"/><path d="M4 6 L6 8 L4 10 M7.5 10.5 H11" fill="none" stroke="#CED0D6" stroke-width="1"/></svg>
<div class="row" style="left:71px;top:903px">entrypoint.sh</div>
<div class="a" style="left:304px;top:13px;width:8px;height:750px;background:rgba(110,112,118,0.5)"></div>
<div class="a" style="left:1px;top:912px;width:212px;height:8px;background:rgba(110,112,118,0.5)"></div>
</div>
<div class="a" style="left:0;top:40px;width:313px;height:1px;background:#1E1F22"></div>
</div>
<div class="a" style="left:354px;top:40px;width:1px;height:962px;background:#1E1F22"></div>
<div id="editor" class="a">
<svg style="left:12px;top:13px" width="16" height="16" viewBox="0 0 16 16"><circle cx="8" cy="8" r="6.5" fill="#222D52" stroke="#6387EB" stroke-width="1"/><path d="M10.2 5.8 C9.7 5.2 9 4.9 8.1 4.9 C6.4 4.9 5.1 6.3 5.1 8 C5.1 9.7 6.4 11.1 8.1 11.1 C9 11.1 9.7 10.8 10.2 10.2" fill="none" stroke="#7D9CF0" stroke-width="1"/></svg>
<div class="tab" style="left:33px;color:#DFE1E5;font-size:13.78px">BlabController.java</div>
<svg style="left:191px;top:13px" width="16" height="16" viewBox="0 0 16 16"><circle cx="8" cy="8" r="6.5" fill="#222D52" stroke="#6387EB" stroke-width="1"/><path d="M10.2 5.8 C9.7 5.2 9 4.9 8.1 4.9 C6.4 4.9 5.1 6.3 5.1 8 C5.1 9.7 6.4 11.1 8.1 11.1 C9 11.1 9.7 10.8 10.2 10.2" fill="none" stroke="#7D9CF0" stroke-width="1"/></svg>
<div class="tab" style="left:212px;color:#BCBEC4;font-size:13.98px">HomeController.java</div>
<svg style="left:381px;top:13px" width="16" height="16" viewBox="0 0 16 16"><circle cx="8" cy="8" r="6.5" fill="#222D52" stroke="#6387EB" stroke-width="1"/><path d="M10.2 5.8 C9.7 5.2 9 4.9 8.1 4.9 C6.4 4.9 5.1 6.3 5.1 8 C5.1 9.7 6.4 11.1 8.1 11.1 C9 11.1 9.7 10.8 10.2 10.2" fill="none" stroke="#7D9CF0" stroke-width="1"/></svg>
<div class="tab" style="left:402px;color:#BCBEC4;font-size:13.96px">ResetController.java</div>
<svg style="left:570px;top:13px" width="16" height="16" viewBox="0 0 16 16"><circle cx="8" cy="8" r="6.5" fill="#222D52" stroke="#6387EB" stroke-width="1"/><path d="M10.2 5.8 C9.7 5.2 9 4.9 8.1 4.9 C6.4 4.9 5.1 6.3 5.1 8 C5.1 9.7 6.4 11.1 8.1 11.1 C9 11.1 9.7 10.8 10.2 10.2" fill="none" stroke="#7D9CF0" stroke-width="1"/></svg>
<div class="tab" style="left:591px;color:#BCBEC4;font-size:14.1px">ToolsController.java</div>
<svg style="left:757px;top:13px" width="16" height="16" viewBox="0 0 16 16"><circle cx="8" cy="8" r="6.5" fill="#253627" stroke="#5FB865" stroke-width="1"/><path d="M6 4.8 H10 M6 11.2 H10 M8 4.8 V11.2" fill="none" stroke="#5FB865" stroke-width="1.2"/></svg>
<div class="tab" style="left:778px;color:#BCBEC4;font-size:13.5px">BlabberCommand.java</div>
<svg style="left:957px;top:13px" width="16" height="16" viewBox="0 0 16 16"><circle cx="8" cy="8" r="6.5" fill="#222D52" stroke="#6387EB" stroke-width="1"/><path d="M10.2 5.8 C9.7 5.2 9 4.9 8.1 4.9 C6.4 4.9 5.1 6.3 5.1 8 C5.1 9.7 6.4 11.1 8.1 11.1 C9 11.1 9.7 10.8 10.2 10.2" fill="none" stroke="#7D9CF0" stroke-width="1"/></svg>
<div class="tab" style="left:978px;color:#BCBEC4;font-size:13.55px">IgnoreCommand.java</div>
<svg style="left:1150px;top:13px" width="16" height="16" viewBox="0 0 16 16"><circle cx="8" cy="8" r="6.5" fill="#222D52" stroke="#6387EB" stroke-width="1"/><path d="M10.2 5.8 C9.7 5.2 9 4.9 8.1 4.9 C6.4 4.9 5.1 6.3 5.1 8 C5.1 9.7 6.4 11.1 8.1 11.1 C9 11.1 9.7 10.8 10.2 10.2" fill="none" stroke="#7D9CF0" stroke-width="1"/></svg>
<div class="tab" style="left:1171px;color:#BCBEC4;font-size:13.63px">ListenCommand.java</div>
<svg style="left:1341px;top:13px" width="16" height="16" viewBox="0 0 16 16"><circle cx="8" cy="8" r="6.5" fill="#222D52" stroke="#6387EB" stroke-width="1"/><path d="M10.2 5.8 C9.7 5.2 9 4.9 8.1 4.9 C6.4 4.9 5.1 6.3 5.1 8 C5.1 9.7 6.4 11.1 8.1 11.1 C9 11.1 9.7 10.8 10.2 10.2" fill="none" stroke="#7D9CF0" stroke-width="1"/></svg>
<div class="tab" style="left:1362px;width:96px;overflow:hidden;color:#BCBEC4;font-size:13.6px;-webkit-mask-image:linear-gradient(90deg,#000 75%,transparent 100%)">RemoveAccountCommand.java</div>
<svg style="left:160px;top:57px;top:17px" width="9" height="9" viewBox="0 0 9 9"><path d="M0.5 0.5 L8.5 8.5 M8.5 0.5 L0.5 8.5" stroke="#9DA0A8" stroke-width="1"/></svg>
<svg style="left:1473px;top:57px;top:17px" width="12" height="8" viewBox="0 0 12 8"><path d="M1 1.5 L6 6.5 L11 1.5" fill="none" stroke="#CED0D6" stroke-width="1.2"/></svg>
<svg style="left:1502px;top:14px" width="6" height="14" viewBox="0 0 6 14"><g fill="#CED0D6"><circle cx="3" cy="2" r="1.3"/><circle cx="3" cy="7" r="1.3"/><circle cx="3" cy="12" r="1.3"/></g></svg>
<div class="a" style="left:0;top:41px;width:1525px;height:1px;background:#393B40"></div>
<div class="a" style="left:0;top:38px;width:180px;height:4px;border-radius:2px;background:#62656B"></div>
<div class="a" style="left:0;top:42px;width:1525px;height:920px;overflow:hidden">
<div class="a" style="left:0;top:198px;width:1525px;height:22px;background:#26282E"></div>
<div class="a" style="left:71px;top:0;width:1px;height:920px;background:#2B2D30"></div>
<div class="a" style="left:1034px;top:0;width:1px;height:920px;background:#35373B"></div>
<div class="ln" style="top:2px;color:#4B5059">1</div>
<div class="code" style="top:2px"><span class="kw">package</span> com.veracode.verademo.controller;</div>
<div class="ln" style="top:24px;color:#4B5059">2</div>
<div class="code" style="top:24px"></div>
<div class="ln" style="top:46px;color:#4B5059">3</div>
<div class="code" style="top:46px"><span class="kw">import</span> <span style="display:inline-block;background:#393B40;color:#8C8F96;height:20px;line-height:20px;vertical-align:top;margin-top:1px;border-radius:2px;padding:0 0 0 0;width:23px;text-align:center">...</span></div>
<div class="ln" style="top:68px;color:#4B5059">31</div>
<div class="code" style="top:68px"></div>
<div class="ln" style="top:90px;color:#4B5059">32</div>
<div class="code" style="top:90px"><span class="an">@Controller</span><span style="display:inline-block;width:14px;margin-left:12px;position:relative;vertical-align:top;height:22px"><svg style="left:2px;top:5.5px" width="11" height="12" viewBox="0 0 11 12"><g fill="none" stroke="#9A9DA3" stroke-width="1.1"><circle cx="5.5" cy="3" r="2"/><path d="M1.2 11 C1.2 8.4 3 7.3 5.5 7.3 C8 7.3 9.8 8.4 9.8 11 Z" fill="#55585E"/></g></svg></span><span class="usg">John Smith +5</span></div>
<div class="ln" style="top:112px;color:#4B5059">33</div>
<div class="code" style="top:112px"><span class="an">@Scope</span>(<span class="s">&quot;request&quot;</span>)</div>
<div class="ln" style="top:134px;color:#4B5059">34</div>
<div class="code" style="top:134px"><span class="kw">public class</span> BlabController {</div>
<div class="ln" style="top:156px;color:#4B5059">35</div>
<div class="code" style="top:156px">    <span class="kw">private static final</span> Logger <span class="fi">logger</span> = LogManager.<span class="it">getLogger</span>(<span class="hint" style="width:43px;margin-left:2px;margin-right:3px">name:</span><span class="s">&quot;VeraDemo:BlabController&quot;</span>);<span class="usg" style="margin-left:13px">60 usages</span></div>
<div class="ln" style="top:178px;color:#4B5059">36</div>
<div class="code" style="top:178px"></div>
<div class="ln" style="top:200px;color:#A1A3AB">37</div>
<div class="code" style="top:200px">    <span class="kw">private final</span> String <span class="f" style="position:relative;background:#3B2B2D;padding:3.3px 0 1.4px 0">sqlBlabsByMe<svg style="left:0;top:16.5px" width="96" height="3.5" viewBox="0 0 96 3.5"><polyline points="0,3 2,0.5 4,3 6,0.5 8,3 10,0.5 12,3 14,0.5 16,3 18,0.5 20,3 22,0.5 24,3 26,0.5 28,3 30,0.5 32,3 34,0.5 36,3 38,0.5 40,3 42,0.5 44,3 46,0.5 48,3 50,0.5 52,3 54,0.5 56,3 58,0.5 60,3 62,0.5 64,3 66,0.5 68,3 70,0.5 72,3 74,0.5 76,3 78,0.5 80,3 82,0.5 84,3 86,0.5 88,3 90,0.5 92,3 94,0.5 96,3" fill="none" stroke="#C9A44A" stroke-width="0.8"/></svg></span> = <span class="s">&quot;SELECT blabs.content, blabs.timestamp, COUNT(comments.blabber), blabs.</span><span class="s" style="position:relative;">blabid<svg style="left:0;top:12.5px" width="48" height="3.5" viewBox="0 0 48 3.5"><polyline points="0,3 2,0.5 4,3 6,0.5 8,3 10,0.5 12,3 14,0.5 16,3 18,0.5 20,3 22,0.5 24,3 26,0.5 28,3 30,0.5 32,3 34,0.5 36,3 38,0.5 40,3 42,0.5 44,3 46,0.5 48,3" fill="none" stroke="#7FA583" stroke-width="0.8"/></svg></span><span class="s"> &quot;</span><span class="usg" style="margin-left:12px">1 usage</span></div>
<div class="ln" style="top:222px;color:#4B5059">38</div>
<div class="code" style="top:222px">            + <span class="s">&quot;FROM blabs LEFT JOIN comments ON blabs.</span><span class="s" style="position:relative;">blabid<svg style="left:0;top:12.5px" width="48" height="3.5" viewBox="0 0 48 3.5"><polyline points="0,3 2,0.5 4,3 6,0.5 8,3 10,0.5 12,3 14,0.5 16,3 18,0.5 20,3 22,0.5 24,3 26,0.5 28,3 30,0.5 32,3 34,0.5 36,3 38,0.5 40,3 42,0.5 44,3 46,0.5 48,3" fill="none" stroke="#7FA583" stroke-width="0.8"/></svg></span><span class="s"> = comments.</span><span class="s" style="position:relative;">blabid<svg style="left:0;top:12.5px" width="48" height="3.5" viewBox="0 0 48 3.5"><polyline points="0,3 2,0.5 4,3 6,0.5 8,3 10,0.5 12,3 14,0.5 16,3 18,0.5 20,3 22,0.5 24,3 26,0.5 28,3 30,0.5 32,3 34,0.5 36,3 38,0.5 40,3 42,0.5 44,3 46,0.5 48,3" fill="none" stroke="#7FA583" stroke-width="0.8"/></svg></span><span class="s"> &quot;</span></div>
<div class="ln" style="top:244px;color:#4B5059">39</div>
<div class="code" style="top:244px">            + <span class="s">&quot;WHERE blabs.blabber = ? GROUP BY blabs.</span><span class="s" style="position:relative;">blabid<svg style="left:0;top:12.5px" width="48" height="3.5" viewBox="0 0 48 3.5"><polyline points="0,3 2,0.5 4,3 6,0.5 8,3 10,0.5 12,3 14,0.5 16,3 18,0.5 20,3 22,0.5 24,3 26,0.5 28,3 30,0.5 32,3 34,0.5 36,3 38,0.5 40,3 42,0.5 44,3 46,0.5 48,3" fill="none" stroke="#7FA583" stroke-width="0.8"/></svg></span><span class="s"> ORDER BY blabs.timestamp DESC;&quot;</span>;</div>
<div class="ln" style="top:266px;color:#4B5059">40</div>
<div class="code" style="top:266px"></div>
<div class="ln" style="top:288px;color:#4B5059">41</div>
<div class="code" style="top:288px">    <span class="kw">private final</span> String <span class="f">sqlBlabsForMe</span> = <span class="s">&quot;SELECT users.username, users.blab_name, blabs.content, blabs.timestamp, COUNT(comments.blabber), blabs.</span><span class="s" style="position:relative;">blabid<svg style="left:0;top:12.5px" width="48" height="3.5" viewBox="0 0 48 3.5"><polyline points="0,3 2,0.5 4,3 6,0.5 8,3 10,0.5 12,3 14,0.5 16,3 18,0.5 20,3 22,0.5 24,3 26,0.5 28,3 30,0.5 32,3 34,0.5 36,3 38,0.5 40,3 42,0.5 44,3 46,0.5 48,3" fill="none" stroke="#7FA583" stroke-width="0.8"/></svg></span><span class="s"> &quot;</span><span class="usg" style="margin-left:13px">2 usages</span></div>
<div class="ln" style="top:310px;color:#4B5059">42</div>
<div class="code" style="top:310px">            + <span class="s">&quot;FROM blabs INNER JOIN users ON blabs.blabber = users.username INNER JOIN listeners ON blabs.blabber = listeners.blabber &quot;</span></div>
<div class="ln" style="top:332px;color:#4B5059">43</div>
<div class="code" style="top:332px">            + <span class="s">&quot;LEFT JOIN comments ON blabs.</span><span class="s" style="position:relative;">blabid<svg style="left:0;top:12.5px" width="48" height="3.5" viewBox="0 0 48 3.5"><polyline points="0,3 2,0.5 4,3 6,0.5 8,3 10,0.5 12,3 14,0.5 16,3 18,0.5 20,3 22,0.5 24,3 26,0.5 28,3 30,0.5 32,3 34,0.5 36,3 38,0.5 40,3 42,0.5 44,3 46,0.5 48,3" fill="none" stroke="#7FA583" stroke-width="0.8"/></svg></span><span class="s"> = comments.</span><span class="s" style="position:relative;">blabid<svg style="left:0;top:12.5px" width="48" height="3.5" viewBox="0 0 48 3.5"><polyline points="0,3 2,0.5 4,3 6,0.5 8,3 10,0.5 12,3 14,0.5 16,3 18,0.5 20,3 22,0.5 24,3 26,0.5 28,3 30,0.5 32,3 34,0.5 36,3 38,0.5 40,3 42,0.5 44,3 46,0.5 48,3" fill="none" stroke="#7FA583" stroke-width="0.8"/></svg></span><span class="s"> WHERE listeners.listener = ? &quot;</span></div>
<div class="ln" style="top:354px;color:#4B5059">44</div>
<div class="code" style="top:354px">            + <span class="s">&quot;GROUP BY blabs.</span><span class="s" style="position:relative;">blabid<svg style="left:0;top:12.5px" width="48" height="3.5" viewBox="0 0 48 3.5"><polyline points="0,3 2,0.5 4,3 6,0.5 8,3 10,0.5 12,3 14,0.5 16,3 18,0.5 20,3 22,0.5 24,3 26,0.5 28,3 30,0.5 32,3 34,0.5 36,3 38,0.5 40,3 42,0.5 44,3 46,0.5 48,3" fill="none" stroke="#7FA583" stroke-width="0.8"/></svg></span><span class="s"> ORDER BY blabs.timestamp DESC LIMIT %d OFFSET %d;&quot;</span>;</div>
<div class="ln" style="top:376px;color:#4B5059">45</div>
<div class="code" style="top:376px"></div>
<div class="ln" style="top:398px;color:#4B5059">46</div>
<div class="code" style="top:398px">    <span class="an">@RequestMapping</span>(value = <span class="s">&quot;/feed&quot;</span>, method = RequestMethod.<span class="fi">GET</span>)<span style="display:inline-block;width:14px;margin-left:12px;position:relative;vertical-align:top;height:22px"><svg style="left:2px;top:5.5px" width="11" height="12" viewBox="0 0 11 12"><g fill="none" stroke="#9A9DA3" stroke-width="1.1"><circle cx="5.5" cy="3" r="2"/><path d="M1.2 11 C1.2 8.4 3 7.3 5.5 7.3 C8 7.3 9.8 8.4 9.8 11 Z" fill="#55585E"/></g></svg></span><span class="usg">John Smith +4</span></div>
<div class="ln" style="top:420px;color:#4B5059">47</div>
<div class="code" style="top:420px">    <span class="kw">public</span> String <span class="m">showFeed</span>(</div>
<div class="ln" style="top:442px;color:#4B5059">48</div>
<div class="code" style="top:442px">            <span class="an">@RequestParam</span>(value = <span class="s">&quot;type&quot;</span>, required = <span class="kw">false</span>) String <span class="gr">type</span>,</div>
<div class="ln" style="top:464px;color:#4B5059">49</div>
<div class="code" style="top:464px">            Model model,</div>
<div class="ln" style="top:486px;color:#4B5059">50</div>
<div class="code" style="top:486px">            HttpServletRequest httpRequest) {</div>
<div class="ln" style="top:508px;color:#4B5059">51</div>
<div class="code" style="top:508px">        <span class="fi">logger</span>.info(<span class="s">&quot;Entering showFeed&quot;</span>);</div>
<div class="ln" style="top:530px;color:#4B5059">52</div>
<div class="code" style="top:530px"></div>
<div class="ln" style="top:552px;color:#4B5059">53</div>
<div class="code" style="top:552px">        String username = (String) httpRequest.getSession().getAttribute(<span class="hint" style="width:19px;margin-left:2px;margin-right:3px">s:</span><span class="s">&quot;username&quot;</span>);</div>
<div class="ln" style="top:574px;color:#4B5059">54</div>
<div class="code" style="top:574px">        <span class="cm">// Ensure user is logged in</span></div>
<div class="ln" style="top:596px;color:#4B5059">55</div>
<div class="code" style="top:596px">        <span class="kw">if</span> (username == <span class="kw">null</span>) {</div>
<div class="ln" style="top:618px;color:#4B5059">56</div>
<div class="code" style="top:618px">            <span class="fi">logger</span>.info(<span class="s">&quot;User is not Logged In - redirecting...&quot;</span>);</div>
<div class="ln" style="top:640px;color:#4B5059">57</div>
<div class="code" style="top:640px">            <span class="kw">return</span> Utils.<span class="it">redirect</span>(<span class="hint" style="width:73px;margin-left:3px;margin-right:4px">destination:</span><span class="s">&quot;login?target=profile&quot;</span>);</div>
<div class="ln" style="top:662px;color:#4B5059">58</div>
<div class="code" style="top:662px">        }</div>
<div class="ln" style="top:684px;color:#4B5059">59</div>
<div class="code" style="top:684px"></div>
<div class="ln" style="top:706px;color:#4B5059">60</div>
<div class="code" style="top:706px">        <span class="fi">logger</span>.info(<span class="s">&quot;User is Logged In - continuing... UA=&quot;</span> + httpRequest.getHeader(<span class="hint" style="width:19px;margin-left:2px;margin-right:3px">s:</span><span class="s">&quot;User-Agent&quot;</span>) + <span class="s">&quot; U=&quot;</span> + username);</div>
<div class="ln" style="top:728px;color:#4B5059">61</div>
<div class="code" style="top:728px"></div>
<div class="ln" style="top:750px;color:#4B5059">62</div>
<div class="code" style="top:750px">        Connection <span class="ul">connect</span> = <span class="kw">null</span>;</div>
<div class="ln" style="top:772px;color:#4B5059">63</div>
<div class="code" style="top:772px">        PreparedStatement <span class="ul">blabsByMe</span> = <span class="kw">null</span>;</div>
<div class="ln" style="top:794px;color:#4B5059">64</div>
<div class="code" style="top:794px">        PreparedStatement <span class="ul">blabsForMe</span> = <span class="kw">null</span>;</div>
<div class="ln" style="top:816px;color:#4B5059">65</div>
<div class="code" style="top:816px"></div>
<div class="ln" style="top:838px;color:#4B5059">66</div>
<div class="code" style="top:838px">        <span class="kw">try</span> {</div>
<div class="ln" style="top:860px;color:#4B5059">67</div>
<div class="code" style="top:860px">            <span class="fi">logger</span>.info(<span class="s">&quot;Getting Database connection&quot;</span>);</div>
<div class="ln" style="top:882px;color:#4B5059">68</div>
<div class="code" style="top:882px">            Class.<span class="it">forName</span>(<span class="hint" style="width:74px;margin-left:3px;margin-right:3px">className:</span><span class="s">&quot;com.mysql.jdbc.Driver&quot;</span>);</div>
<div class="ln" style="top:904px;color:#4B5059">69</div>
<div class="code" style="top:904px">            connect = DriverManager.<span class="it">getConnection</span>(Constants.<span class="it">create</span>().getJdbcConnectionString());</div>
<div class="a" style="left:104px;top:220px;width:1px;height:44px;background:#313338"></div>
<div class="a" style="left:104px;top:308px;width:1px;height:66px;background:#313338"></div>
<div class="a" style="left:104px;top:440px;width:1px;height:484px;background:#313338"></div>
<div class="a" style="left:136px;top:616px;width:1px;height:44px;background:#313338"></div>
<div class="a" style="left:136px;top:858px;width:1px;height:66px;background:#313338"></div>
<svg style="left:55px;top:50px" width="8" height="10" viewBox="0 0 8 10"><path d="M2 1 L6 5 L2 9" fill="none" stroke="#6F737A" stroke-width="1"/></svg>
<svg style="left:81px;top:201px" width="14" height="16" viewBox="0 0 14 16"><path d="M7 1 C3.8 1 2 3.2 2 5.8 C2 7.8 3.3 9 4.3 10 V11 H9.7 V10 C10.7 9 12 7.8 12 5.8 C12 3.2 10.2 1 7 1 Z" fill="#F2C55C"/><path d="M4.5 12.8 H9.5 M5 14.8 H9" stroke="#DFE1E5" stroke-width="1.2"/></svg>
<svg style="left:35px;top:421px" width="16" height="16" viewBox="0 0 16 16"><g fill="none" stroke="#DFE1E5" stroke-width="1.2"><circle cx="8" cy="8" r="2.8"/><path d="M10.8 5.5 V9 C10.8 10.5 12 11 12.8 10.6 C14 10 14.5 9 14.5 8 A6.5 6.5 0 1 0 11 13.7"/></g></svg>
<div class="a" style="left:1515px;top:27px;width:8px;height:65px;background:#4A4B4E"></div>
<div class="a" style="left:1510px;top:40px;width:14px;height:2px;background:#B0658F"></div>
<div class="a" style="left:1510px;top:140px;width:14px;height:2px;background:#5E8A7E"></div>
<div class="a" style="left:1510px;top:876px;width:14px;height:2px;background:#C9A22E"></div>
<div class="a" style="left:1510px;top:903px;width:14px;height:2px;background:#C9A22E"></div>
</div>
<svg style="left:1410px;top:49px" width="12" height="12" viewBox="0 0 12 12"><path d="M6 0.8 L11.5 11 H0.5 Z" fill="#F2C55C" stroke="#F2C55C" stroke-width="1" stroke-linejoin="round"/><path d="M6 4 V7.5" stroke="#1E1F22" stroke-width="1.4"/><circle cx="6" cy="9.3" r="0.8" fill="#1E1F22"/></svg>
<div class="a ui" style="left:1425px;top:45px;line-height:22px;font-size:13px;color:#BCBEC4">21</div>
<svg style="left:1446px;top:49px" width="14" height="14" viewBox="0 0 14 14"><path d="M1 5.5 L4.5 9 L12.5 1" fill="none" stroke="#5FB865" stroke-width="1.5"/><path d="M1 12.5 Q2.5 10.5 4 12.5 T7 12.5 T10 12.5 T13 12.5" fill="none" stroke="#5FB865" stroke-width="1"/></svg>
<div class="a ui" style="left:1463px;top:45px;line-height:22px;font-size:13px;color:#BCBEC4">21</div>
<svg style="left:1486px;top:52px" width="10" height="6" viewBox="0 0 10 6"><path d="M1 5 L5 1 L9 5" fill="none" stroke="#CED0D6" stroke-width="1.1"/></svg>
<svg style="left:1507px;top:53px" width="10" height="6" viewBox="0 0 10 6"><path d="M1 1 L5 5 L9 1" fill="none" stroke="#CED0D6" stroke-width="1.1"/></svg>
</div>
<div id="rstripe" class="a">
<svg style="left:11px;top:12px" width="18" height="19" viewBox="0 0 18 19"><g fill="none" stroke="#CED0D6" stroke-width="1.2" stroke-linejoin="round"><path d="M9 1 C5.5 1 3.8 3.8 3.8 7 V10.8 L1.5 14.5 H16.5 L14.2 10.8 V7 C14.2 3.8 12.5 1 9 1 Z"/></g><path d="M7 16.5 H11 L9 18 Z" fill="#CED0D6"/></svg>
<svg style="left:12px;top:53px" width="18" height="18" viewBox="0 0 18 18"><g fill="none" stroke="#CED0D6" stroke-width="1.2" stroke-linejoin="round" stroke-linecap="round"><path d="M1.5 10.5 C1 5.5 4.5 1.5 9.5 1.5 C12.3 1.5 14.6 2.8 15.8 5"/><path d="M4.3 11.2 C3.8 7.6 6.2 4.4 9.6 4.4 C11 4.4 12.2 4.9 13 5.7"/><path d="M7.2 11.5 C6.8 9.5 7.8 7.4 9.8 7.3"/><path d="M9.8 8.8 H16.5 V14.5 V17 L14.5 14.8 H9.8 Z"/></g></svg>
<div class="a" style="left:11px;top:88px;font:italic 22px 'Liberation Sans',sans-serif;color:#CED0D6;line-height:26px">m</div>
</div>
<div id="status" class="a">
<div class="a" style="left:14px;top:10px;width:8px;height:9px;border:1.2px solid #548AF7;border-radius:2px"></div>
<div class="a ui" style="left:26px;top:0;line-height:28px;font-size:14px;color:#A9ADB4">verademo</div>
<div class="a" style="left:112px;top:10px;width:8px;height:9px;border:1.2px solid #548AF7;border-radius:2px"></div>
<div class="a ui" style="left:124px;top:0;line-height:28px;font-size:14px;color:#A9ADB4">app</div>
<div class="a ui" style="left:172px;top:0;line-height:28px;font-size:14px;color:#A9ADB4">src</div>
<div class="a ui" style="left:214px;top:0;line-height:28px;font-size:14px;color:#A9ADB4">main</div>
<div class="a ui" style="left:267px;top:0;line-height:28px;font-size:14px;color:#A9ADB4">java</div>
<div class="a ui" style="left:315px;top:0;line-height:28px;font-size:14px;color:#A9ADB4">com</div>
<div class="a ui" style="left:365px;top:0;line-height:28px;font-size:14px;color:#A9ADB4">veracode</div>
<div class="a ui" style="left:447px;top:0;line-height:28px;font-size:14px;color:#A9ADB4">verademo</div>
<div class="a ui" style="left:533px;top:0;line-height:28px;font-size:14px;color:#A9ADB4">controller</div>
<svg style="left:617px;top:6px" width="16" height="16" viewBox="0 0 16 16"><circle cx="8" cy="8" r="6.5" fill="#222D52" stroke="#6387EB" stroke-width="1"/><path d="M10.2 5.8 C9.7 5.2 9 4.9 8.1 4.9 C6.4 4.9 5.1 6.3 5.1 8 C5.1 9.7 6.4 11.1 8.1 11.1 C9 11.1 9.7 10.8 10.2 10.2" fill="none" stroke="#7D9CF0" stroke-width="1"/></svg>
<div class="a ui" style="left:637px;top:0;line-height:28px;font-size:14px;color:#A9ADB4">BlabController</div>
<svg style="left:748px;top:6px" width="16" height="16" viewBox="0 0 16 16"><circle cx="8" cy="8.5" r="6.3" fill="#3A2A22" stroke="#E08855" stroke-width="1"/><path d="M6.5 12 V7 C6.5 5.5 7.5 5 9.5 5.2 M5 7.8 H9.5" fill="none" stroke="#E08855" stroke-width="1.1"/><rect x="0.5" y="0.5" width="5" height="5" fill="#2B2D30"/><path d="M1 4.5 L3 1.5 L5 4.5" fill="none" stroke="#CED0D6" stroke-width="0.9"/></svg>
<div class="a ui" style="left:769px;top:0;line-height:28px;font-size:14px;color:#A9ADB4">sqlBlabsByMe</div>
<svg style="left:97px;top:10px" width="6" height="10" viewBox="0 0 6 10"><path d="M1 1 L5 5 L1 9" fill="none" stroke="#9DA0A8" stroke-width="1.1"/></svg>
<svg style="left:157px;top:10px" width="6" height="10" viewBox="0 0 6 10"><path d="M1 1 L5 5 L1 9" fill="none" stroke="#9DA0A8" stroke-width="1.1"/></svg>
<svg style="left:200px;top:10px" width="6" height="10" viewBox="0 0 6 10"><path d="M1 1 L5 5 L1 9" fill="none" stroke="#9DA0A8" stroke-width="1.1"/></svg>
<svg style="left:252px;top:10px" width="6" height="10" viewBox="0 0 6 10"><path d="M1 1 L5 5 L1 9" fill="none" stroke="#9DA0A8" stroke-width="1.1"/></svg>
<svg style="left:300px;top:10px" width="6" height="10" viewBox="0 0 6 10"><path d="M1 1 L5 5 L1 9" fill="none" stroke="#9DA0A8" stroke-width="1.1"/></svg>
<svg style="left:350px;top:10px" width="6" height="10" viewBox="0 0 6 10"><path d="M1 1 L5 5 L1 9" fill="none" stroke="#9DA0A8" stroke-width="1.1"/></svg>
<svg style="left:432px;top:10px" width="6" height="10" viewBox="0 0 6 10"><path d="M1 1 L5 5 L1 9" fill="none" stroke="#9DA0A8" stroke-width="1.1"/></svg>
<svg style="left:517px;top:10px" width="6" height="10" viewBox="0 0 6 10"><path d="M1 1 L5 5 L1 9" fill="none" stroke="#9DA0A8" stroke-width="1.1"/></svg>
<svg style="left:601px;top:10px" width="6" height="10" viewBox="0 0 6 10"><path d="M1 1 L5 5 L1 9" fill="none" stroke="#9DA0A8" stroke-width="1.1"/></svg>
<svg style="left:737px;top:10px" width="6" height="10" viewBox="0 0 6 10"><path d="M1 1 L5 5 L1 9" fill="none" stroke="#9DA0A8" stroke-width="1.1"/></svg>
<div class="a ui" style="left:1681px;top:0;line-height:28px;font-size:13.6px;color:#A9ADB4">37:26</div>
<div class="a ui" style="left:1732px;top:0;line-height:28px;font-size:12px;color:#A9ADB4">CRLF</div>
<div class="a ui" style="left:1780px;top:0;line-height:28px;font-size:14px;color:#A9ADB4">UTF-8</div>
<div class="a ui" style="left:1841px;top:0;line-height:28px;font-size:14px;color:#A9ADB4">Tab*</div>
<svg style="left:1888px;top:8px" width="16" height="16" viewBox="0 0 16 16"><g fill="none" stroke="#CED0D6" stroke-width="1.1"><rect x="1.5" y="7" width="9" height="7.5" rx="1"/><path d="M8.5 7 V4.5 C8.5 2.8 9.8 1.5 11.5 1.5 C13.2 1.5 14.5 2.8 14.5 4.5 V6"/></g><rect x="5" y="10" width="2" height="2" fill="#CED0D6"/></svg>
</div></body></html>
